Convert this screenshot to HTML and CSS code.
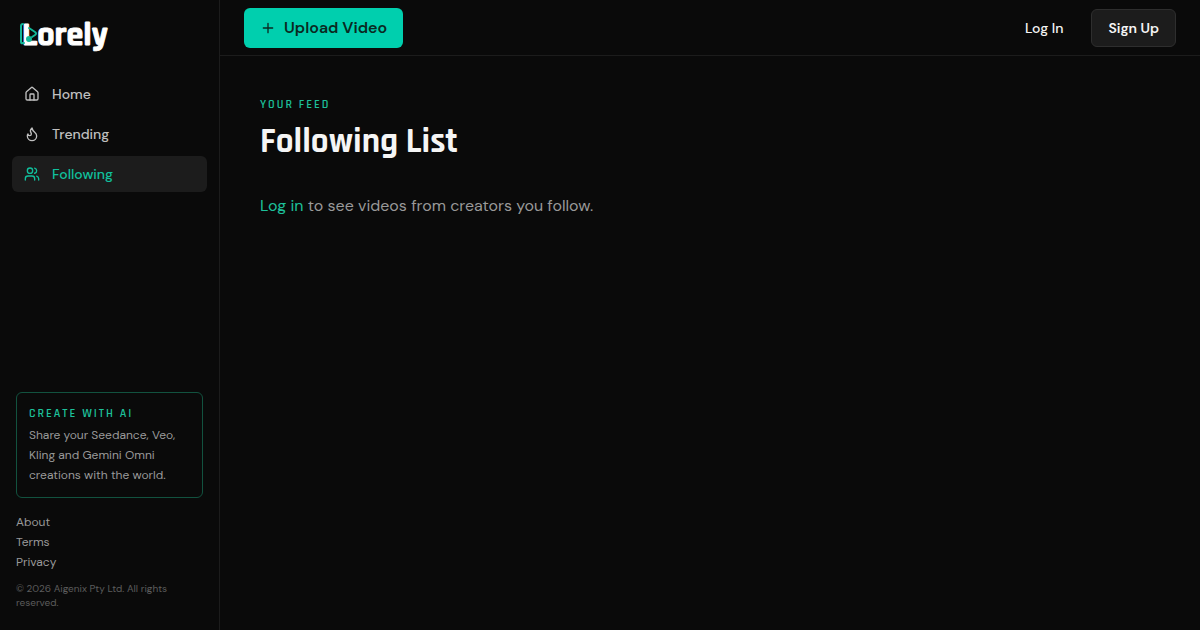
FILE: index.html
```html
<!DOCTYPE html>
<html lang="en">
<head>
    <meta charset="UTF-8">
    <meta name="viewport" content="width=device-width, initial-scale=1.0">
    <title>Following List - Lorely</title>
    <link rel="stylesheet" href="styles.css">
</head>
<body>
    <aside class="sidebar">
        <a href="#" class="logo">
            <span class="logo-text">Lorely</span>
            <svg class="logo-mark" viewBox="0 0 20 26" fill="none" stroke="#12b898" stroke-width="2" stroke-linecap="round" stroke-linejoin="round" aria-hidden="true">
                <path d="M3 2Q1 2 1 4V20Q1 22 3 21L4 21"/>
                <path d="M9 6L15 10Q17 11.500 15 13L12 15"/>
                <circle cx="9" cy="17" r="2" fill="#12b898"/>
            </svg>
        </a>
        <nav class="nav">
            <a href="#" class="nav-item">
                <svg class="icon" viewBox="0 0 24 24" aria-hidden="true">
                    <path d="M15 21v-8a1 1 0 0 0-1-1h-4a1 1 0 0 0-1 1v8"/>
                    <path d="M3 10a2 2 0 0 1 .709-1.528l7-5.999a2 2 0 0 1 2.582 0l7 5.999A2 2 0 0 1 21 10v9a2 2 0 0 1-2 2H5a2 2 0 0 1-2-2z"/>
                </svg>
                Home
            </a>
            <a href="#" class="nav-item">
                <svg class="icon" viewBox="0 0 24 24" aria-hidden="true">
                    <path d="M8.500 14.500A2.500 2.500 0 0 0 11 12c0-1.380-.5-2-1-3-1.072-2.143-.224-4.054 2-6 .5 2.500 2 4.900 4 6.500 2 1.600 3 3.500 3 5.500a7 7 0 1 1-14 0c0-1.153.433-2.294 1-3a2.500 2.500 0 0 0 2.500 2.500z"/>
                </svg>
                Trending
            </a>
            <a href="#" class="nav-item active" aria-current="page">
                <svg class="icon" viewBox="0 0 24 24" aria-hidden="true">
                    <path d="M16 21v-2a4 4 0 0 0-4-4H6a4 4 0 0 0-4 4v2"/>
                    <circle cx="9" cy="7" r="4"/>
                    <path d="M22 21v-2a4 4 0 0 0-3-3.870"/>
                    <path d="M16 3.130a4 4 0 0 1 0 7.750"/>
                </svg>
                Following
            </a>
        </nav>
        <div class="sidebar-footer">
            <div class="promo">
                <p class="eyebrow">Create with AI</p>
                <p class="promo-text">Share your Seedance, Veo, Kling and Gemini Omni creations with the world.</p>
            </div>
            <div class="footer-links">
                <a href="#">About</a>
                <a href="#">Terms</a>
                <a href="#">Privacy</a>
            </div>
            <p class="copyright">© 2026 Aigenix Pty Ltd. All rights reserved.</p>
        </div>
    </aside>

    <div class="page">
        <header class="topbar">
            <button type="button" class="upload-button">
                <svg class="icon" viewBox="0 0 24 24" aria-hidden="true">
                    <path d="M5 12h14M12 5v14"/>
                </svg>
                Upload Video
            </button>
            <div class="account">
                <a href="#" class="login">Log In</a>
                <button type="button" class="signup">Sign Up</button>
            </div>
        </header>
        <main class="content">
            <p class="eyebrow">Your feed</p>
            <h1>Following List</h1>
            <p class="empty"><a href="#">Log in</a> to see videos from creators you follow.</p>
        </main>
    </div>
</body>
</html>
```
FILE: styles.css
```css
* {
    box-sizing: border-box;
}
body {
    margin: 0;
    min-height: 100vh;
    display: flex;
    background-color: #0a0a0a;
    color: #f5f5f5;
    font-family: 'DM Sans', Inter, sans-serif;
    font-size: 14px;
    line-height: 20px;
}
p, h1 {
    margin: 0;
}
a {
    color: inherit;
    text-decoration: none;
}
button {
    font-family: inherit;
    cursor: pointer;
}
.icon {
    width: 16px;
    height: 16px;
    flex-shrink: 0;
    fill: none;
    stroke: currentColor;
    stroke-width: 2;
    stroke-linecap: round;
    stroke-linejoin: round;
}
.eyebrow {
    font-family: Rajdhani, Roboto, sans-serif;
    font-size: 12px;
    font-weight: 600;
    line-height: 18px;
    letter-spacing: 2px;
    text-transform: uppercase;
    color: #1dc09a;
}

/* Sidebar */
.sidebar {
    width: 220px;
    flex-shrink: 0;
    display: flex;
    flex-direction: column;
    border-right: 1px solid #1c1c1c;
}
.logo {
    position: relative;
    height: 76px;
    padding: 17px 22px;
}
.logo-text {
    font-family: Rajdhani, Roboto, sans-serif;
    font-size: 34px;
    font-weight: 700;
    line-height: 36px;
    color: #ffffff;
    -webkit-text-stroke: 1px #ffffff;
}
.logo-mark {
    position: absolute;
    left: 20px;
    top: 22px;
    width: 20px;
    height: 26px;
}
.nav {
    display: flex;
    flex-direction: column;
    gap: 4px;
    padding: 0 12px;
}
.nav-item {
    display: flex;
    align-items: center;
    gap: 12px;
    padding: 8px 12px;
    border-radius: 6px;
    font-weight: 500;
    color: #c0c0c0;
}
.nav-item.active {
    background-color: #1c1c1c;
    color: #10c09d;
}
.sidebar-footer {
    margin-top: auto;
    padding: 0 16px 20px;
}
.promo {
    padding: 12px;
    border: 1px solid #12523f;
    border-radius: 6px;
}
.promo-text {
    margin-top: 2px;
    font-size: 12px;
    line-height: 20px;
    color: #999999;
}
.footer-links {
    display: flex;
    flex-direction: column;
    align-items: flex-start;
    margin: 14px 0 10px;
    font-size: 12px;
    color: #999999;
}
.copyright {
    font-size: 10px;
    line-height: 14px;
    color: #5c5c5c;
}

/* Main column */
.page {
    flex: 1;
    min-width: 0;
}
.topbar {
    display: flex;
    align-items: center;
    justify-content: space-between;
    height: 56px;
    padding: 0 24px;
    border-bottom: 1px solid #1c1c1c;
}
.upload-button {
    display: flex;
    align-items: center;
    gap: 8px;
    height: 40px;
    padding: 0 16px;
    border: none;
    border-radius: 6px;
    background-color: #00cfae;
    color: #0a2a22;
    font-size: 16px;
    font-weight: 600;
}
.account {
    display: flex;
    align-items: center;
    gap: 28px;
}
.login {
    font-weight: 500;
}
.signup {
    height: 38px;
    padding: 0 16px;
    border: 1px solid #2e2e2e;
    border-radius: 6px;
    background-color: #1c1c1c;
    color: #f5f5f5;
    font-size: 14px;
    font-weight: 600;
}
.content {
    padding: 40px;
}
h1 {
    margin: 8px 0 30px;
    font-family: Rajdhani, Roboto, sans-serif;
    font-size: 35px;
    font-weight: 700;
    line-height: 40px;
}
.empty {
    font-size: 16px;
    line-height: 28px;
    color: #999999;
}
.empty a {
    color: #1dc09a;
}
```
